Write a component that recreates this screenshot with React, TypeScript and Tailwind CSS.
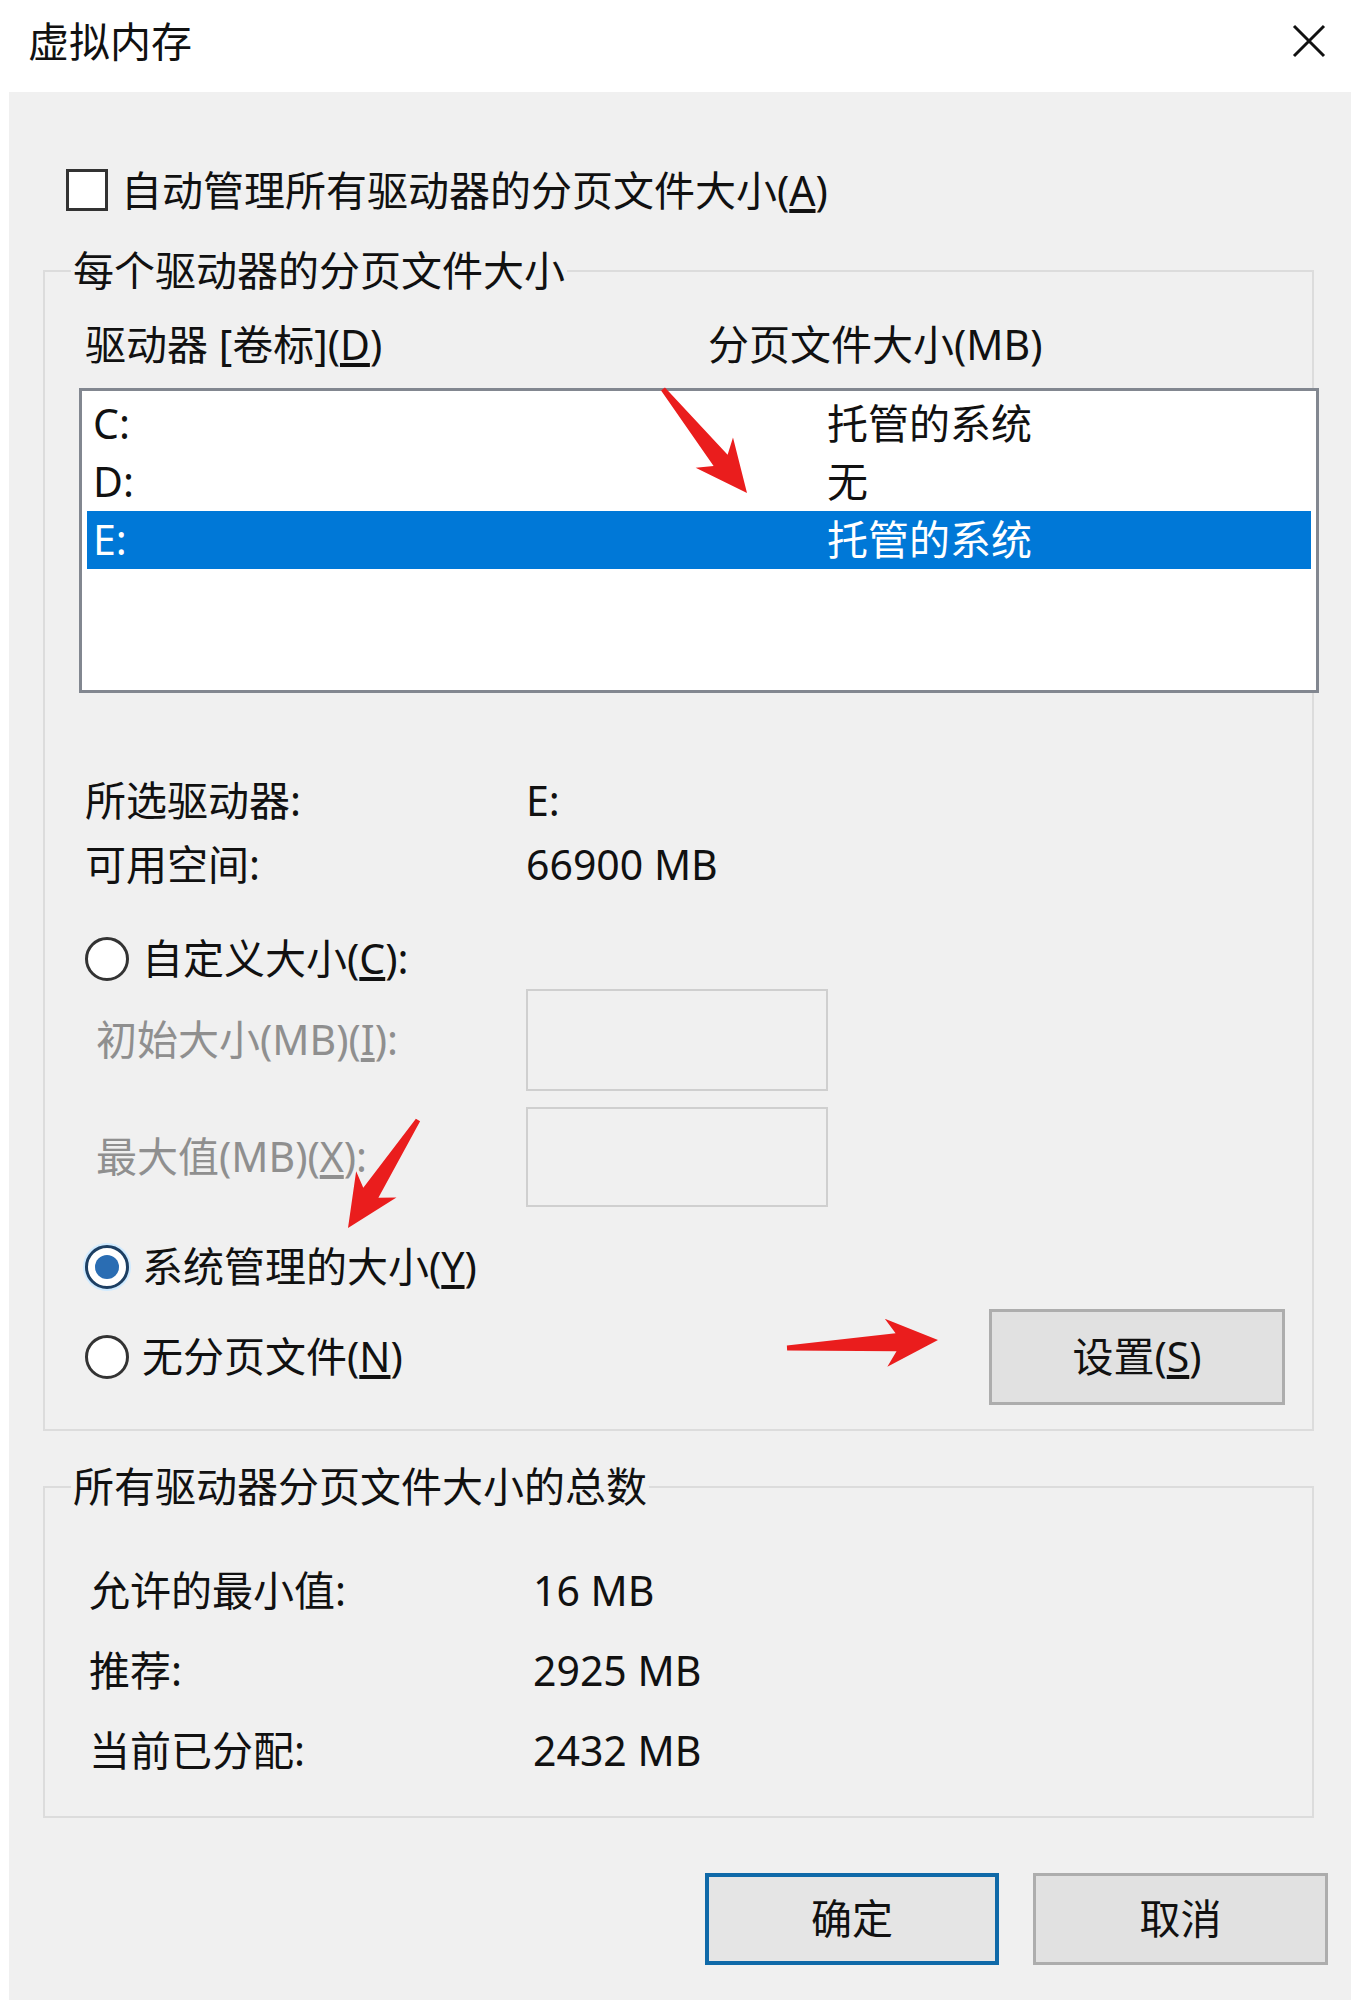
import React from 'react';

const font = { fontFamily: '"Noto Sans", "Noto Sans CJK SC", sans-serif' };

// red hand-drawn style annotation arrow, from tail to tip
const Arrow = ({ x1, y1, x2, y2 }: { x1: number; y1: number; x2: number; y2: number }) => {
  const L = Math.hypot(x2 - x1, y2 - y1);
  const a = (Math.atan2(y2 - y1, x2 - x1) * 180) / Math.PI;
  const pts = `0,-2.5 ${L - 42},-9 ${L - 52},-24 ${L},0 ${L - 52},24 ${L - 42},9 0,2.5`;
  return <polygon points={pts} transform={`translate(${x1} ${y1}) rotate(${a})`} fill="#ea1d1d" />;
};

const Radio = ({ checked }: { checked?: boolean }) => (
  <span
    className={
      'flex h-[44px] w-[44px] shrink-0 items-center justify-center rounded-full border-[3px] bg-white ' +
      (checked ? 'border-[#1d3f63] shadow-[0_0_0_2px_#cfeaff]' : 'border-[#333333]')
    }
  >
    {checked && <span className="h-[24px] w-[24px] rounded-full bg-[#2a6db3]" />}
  </span>
);

const GroupBox = ({ title, className, children }: { title: string; className?: string; children: React.ReactNode }) => (
  <div className={'ml-[34px] mr-[37px] border-2 border-[#dcdcdc] ' + (className ?? '')}>
    <div className="-mt-[30px] ml-[26px] w-fit bg-[#f0f0f0] px-[2px] leading-[56px]">{title}</div>
    {children}
  </div>
);

export default function App() {
  return (
    <div className="relative h-[2000px] w-[1351px] overflow-hidden bg-white text-[41px] text-[#111]" style={font}>
      {/* title bar */}
      <div className="flex h-[92px] items-center justify-between pb-[10px] pl-[28px] pr-[24px]">
        <span className="leading-[56px]">虚拟内存</span>
        <svg width="36" height="36" viewBox="0 0 36 36">
          <path d="M3 3 L33 33 M33 3 L3 33" stroke="#111" strokeWidth="3" />
        </svg>
      </div>

      <div className="ml-[9px] flex h-[1908px] flex-col bg-[#f0f0f0] pt-[70px]">
        {/* auto manage */}
        <div className="flex h-[56px] items-center pl-[57px]">
          <span className="h-[42px] w-[42px] border-[3px] border-[#333] bg-white" />
          <span className="ml-[13px] leading-[56px]">
            自动管理所有驱动器的分页文件大小(<u>A</u>)
          </span>
        </div>

        <GroupBox title="每个驱动器的分页文件大小" className="mt-[52px]">
          <div className="pb-[24px] pl-[40px] pr-[27px]">
            <div className="mt-[18px] flex leading-[56px]">
              <span className="w-[623px]">
                驱动器 [卷标](<u>D</u>)
              </span>
              <span>分页文件大小(MB)</span>
            </div>

            <div className="-ml-[6px] -mr-[34px] mt-[16px] h-[305px] border-[3px] border-[#828790] bg-white px-[5px] pt-[4px]">
              {[
                ['C:', '托管的系统', false],
                ['D:', '无', false],
                ['E:', '托管的系统', true],
              ].map(([d, v, sel]) => (
                <div
                  key={d as string}
                  className={'flex h-[58px] items-center pl-[6px] ' + (sel ? 'bg-[#0078d7] text-white' : '')}
                >
                  <span className="w-[734px]">{d}</span>
                  <span>{v}</span>
                </div>
              ))}
            </div>

            <div className="mt-[76px] flex h-[64px] items-center">
              <span className="w-[441px]">所选驱动器:</span>
              <span>E:</span>
            </div>
            <div className="flex h-[64px] items-center">
              <span className="w-[441px]">可用空间:</span>
              <span>66900 MB</span>
            </div>

            <div className="mt-[34px] flex h-[56px] items-center">
              <Radio />
              <span className="ml-[13px]">
                自定义大小(<u>C</u>):
              </span>
            </div>

            <div className="mt-[2px] flex items-center text-[#8f8f8f]">
              <span className="w-[441px] pl-[11px]">
                初始大小(MB)(<u>I</u>):
              </span>
              <span className="h-[102px] w-[302px] border-2 border-[#cfcfcf] bg-[#f0f0f0]" />
            </div>
            <div className="mt-[16px] flex items-center text-[#8f8f8f]">
              <span className="w-[441px] pl-[11px]">
                最大值(MB)(<u>X</u>):
              </span>
              <span className="h-[100px] w-[302px] border-2 border-[#cfcfcf] bg-[#f0f0f0]" />
            </div>

            <div className="mt-[32px] flex h-[56px] items-center">
              <Radio checked />
              <span className="ml-[13px]">
                系统管理的大小(<u>Y</u>)
              </span>
            </div>

            <div className="mt-[14px] flex items-center justify-between">
              <div className="flex items-center">
                <Radio />
                <span className="ml-[13px]">
                  无分页文件(<u>N</u>)
                </span>
              </div>
              <button className="h-[96px] w-[296px] border-[3px] border-[#adadad] bg-[#e1e1e1]">
                设置(<u>S</u>)
              </button>
            </div>
          </div>
        </GroupBox>

        <GroupBox title="所有驱动器分页文件大小的总数" className="mt-[55px]">
          <div className="mt-[37px] pb-[25px] pl-[44px]">
            {[
              ['允许的最小值:', '16 MB'],
              ['推荐:', '2925 MB'],
              ['当前已分配:', '2432 MB'],
            ].map(([k, v]) => (
              <div key={k} className="flex h-[80px] items-center">
                <span className="w-[444px]">{k}</span>
                <span>{v}</span>
              </div>
            ))}
          </div>
        </GroupBox>

        <div className="mt-[55px] flex justify-end gap-[34px] pr-[23px]">
          <button className="h-[92px] w-[294px] border-[4px] border-[#0f69a8] bg-[#e5e5e5]">确定</button>
          <button className="h-[92px] w-[295px] border-[3px] border-[#adadad] bg-[#e1e1e1]">取消</button>
        </div>
      </div>

      {/* annotation arrows */}
      <svg className="pointer-events-none absolute left-0 top-0" width="1351" height="2000">
        <Arrow x1={663} y1={389} x2={747} y2={493} />
        <Arrow x1={418} y1={1120} x2={348} y2={1228} />
        <Arrow x1={787} y1={1348} x2={938} y2={1340} />
      </svg>
    </div>
  );
}
